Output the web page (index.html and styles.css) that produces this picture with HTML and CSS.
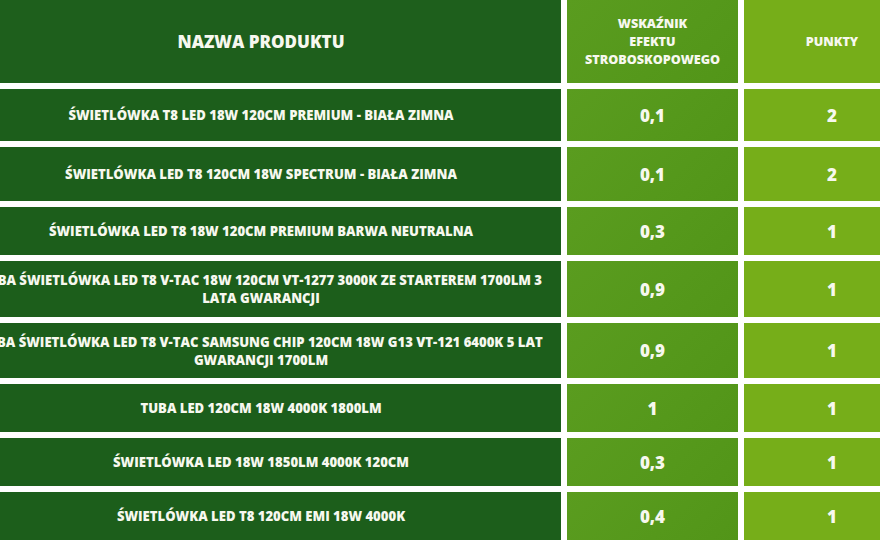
FILE: index.html
```html
<!DOCTYPE html>
<html lang="pl">
<head>
<meta charset="utf-8">
<title>Ranking świetlówek LED</title>
<link rel="stylesheet" href="styles.css">
</head>
<body>
<div class="table">
  <div class="cell name head-name">NAZWA PRODUKTU</div>
  <div class="cell val head-small">WSKAŹNIK<br>EFEKTU<br>STROBOSKOPOWEGO</div>
  <div class="cell pts head-small">PUNKTY</div>

  <div class="cell name">ŚWIETLÓWKA T8 LED 18W 120CM PREMIUM - BIAŁA ZIMNA</div>
  <div class="cell val num">0,1</div>
  <div class="cell pts num">2</div>

  <div class="cell name">ŚWIETLÓWKA LED T8 120CM 18W SPECTRUM - BIAŁA ZIMNA</div>
  <div class="cell val num">0,1</div>
  <div class="cell pts num">2</div>

  <div class="cell name">ŚWIETLÓWKA LED T8 18W 120CM PREMIUM BARWA NEUTRALNA</div>
  <div class="cell val num">0,3</div>
  <div class="cell pts num">1</div>

  <div class="cell name">TUBA ŚWIETLÓWKA LED T8 V-TAC 18W 120CM VT-1277 3000K ZE STARTEREM 1700LM 3 LATA GWARANCJI</div>
  <div class="cell val num">0,9</div>
  <div class="cell pts num">1</div>

  <div class="cell name">TUBA ŚWIETLÓWKA LED T8 V-TAC SAMSUNG CHIP 120CM 18W G13 VT-121 6400K 5 LAT GWARANCJI 1700LM</div>
  <div class="cell val num">0,9</div>
  <div class="cell pts num">1</div>

  <div class="cell name">TUBA LED 120CM 18W 4000K 1800LM</div>
  <div class="cell val num">1</div>
  <div class="cell pts num">1</div>

  <div class="cell name">ŚWIETLÓWKA LED 18W 1850LM 4000K 120CM</div>
  <div class="cell val num">0,3</div>
  <div class="cell pts num">1</div>

  <div class="cell name">ŚWIETLÓWKA LED T8 120CM EMI 18W 4000K</div>
  <div class="cell val num">0,4</div>
  <div class="cell pts num">1</div>
</div>
</body>
</html>
```
FILE: styles.css
```css
html, body {
  margin: 0;
  padding: 0;
  background: #ffffff;
  overflow: hidden;
}

body {
  width: 880px;
  height: 540px;
  font-family: "Open Sans", "Liberation Sans", sans-serif;
}

.table {
  display: grid;
  grid-template-columns: 600px 171px 176px;
  grid-template-rows: 83px 52px 54px 48px 56px 55px 48px 48px 48px;
  column-gap: 6px;
  row-gap: 6px;
  margin-left: -39px;
}

.cell {
  display: flex;
  align-items: center;
  justify-content: center;
  text-align: center;
  color: #f7f8ef;
  font-weight: 800;
  text-transform: uppercase;
}

.name {
  background: #1c5e1b;
  font-size: 13.1px;
  line-height: 18px;
  padding: 0 16px;
}

.head-name {
  font-size: 17px;
  background: #1e5f1c;
}

.val {
  background: linear-gradient(135deg, #5a9c1f 0%, #55981b 60%, #529518 100%);
}

.pts {
  background: #76ae19;
}

.head-small {
  font-size: 12.6px;
  line-height: 18px;
}

.num {
  font-size: 17px;
}
```
